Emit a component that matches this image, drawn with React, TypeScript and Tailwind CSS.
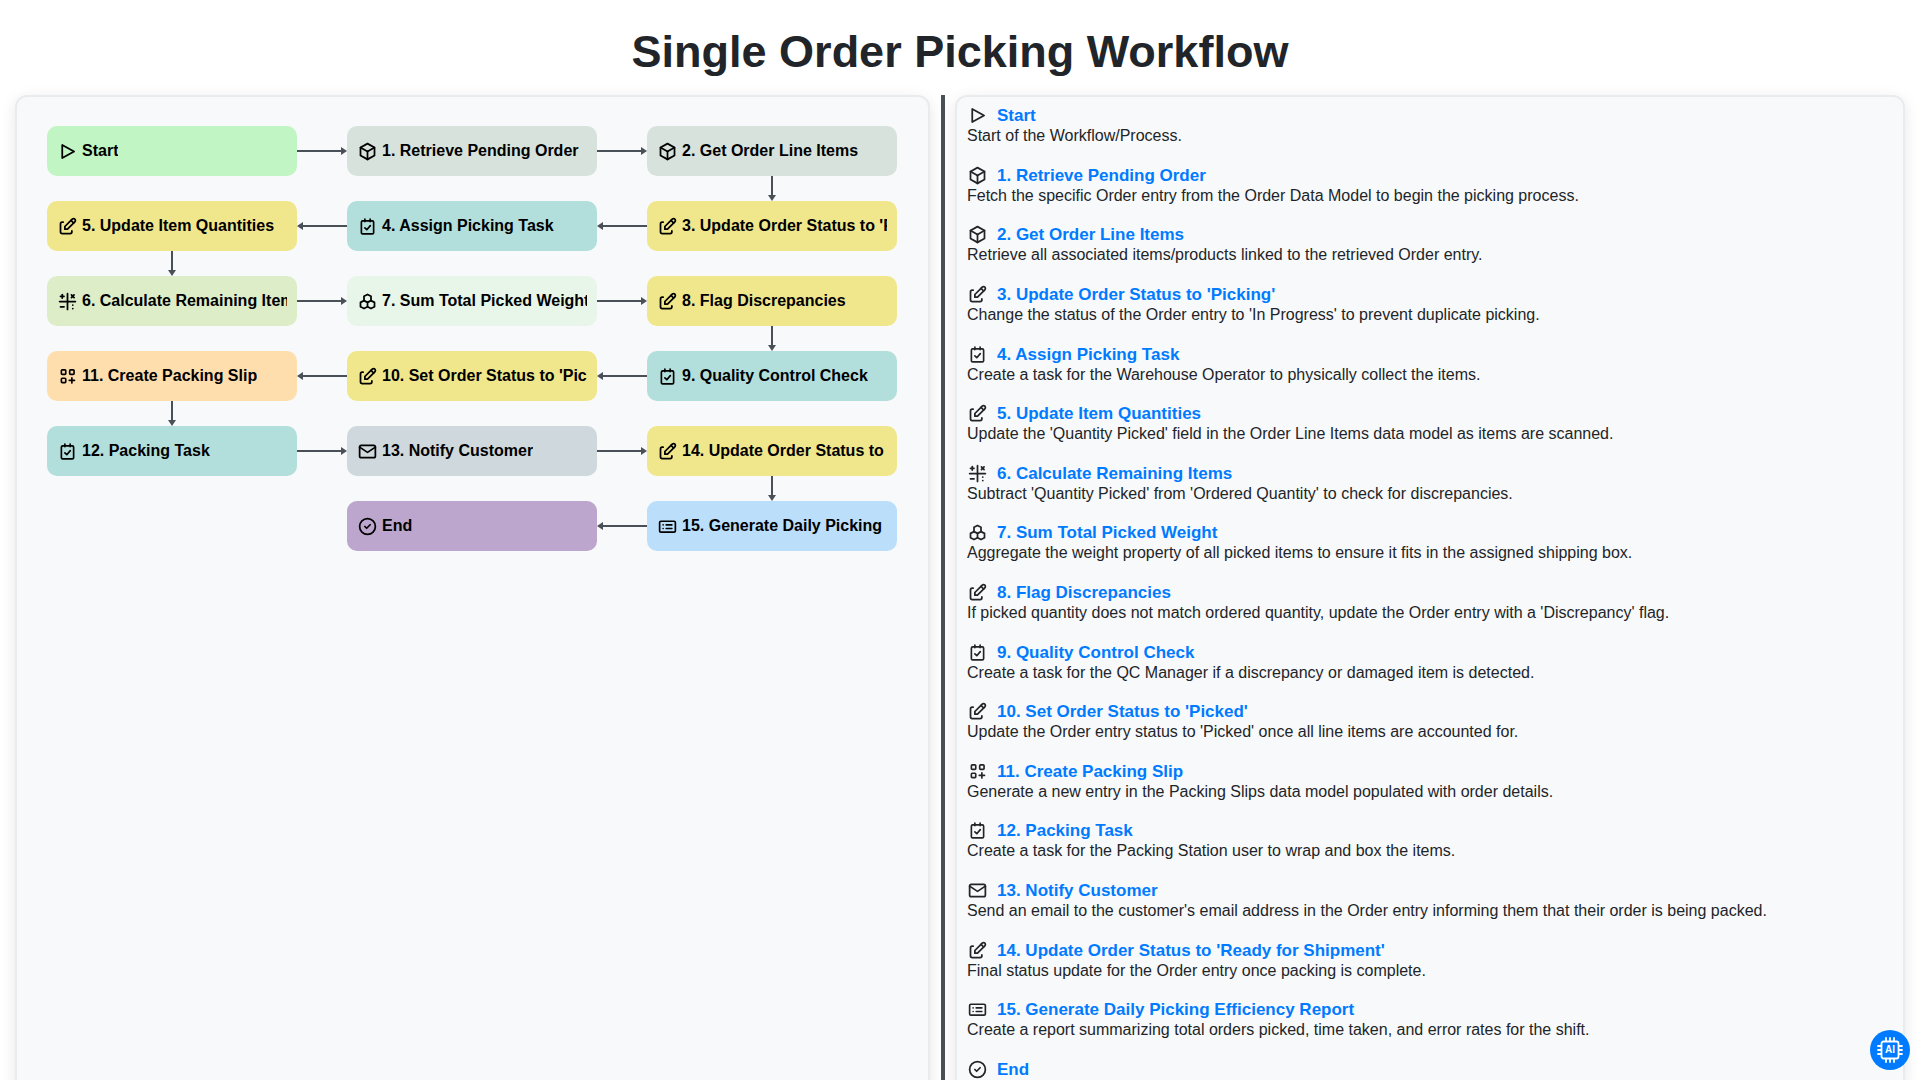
import type { ReactNode } from 'react';
import {
  TbBox,
  TbEdit,
  TbMathSymbols,
  TbHexagons,
  TbMail,
  TbCircleCheck,
} from 'react-icons/tb';

type IconProps = { size?: number; className?: string };

function PlayIcon({ size = 21, className }: IconProps) {
  return (
    <svg width={size} height={size} viewBox="0 0 24 24" fill="none" stroke="currentColor" strokeWidth="2" strokeLinecap="round" strokeLinejoin="round" className={className}>
      <path d="M6 4.5v15l13.5 -7.5z" />
    </svg>
  );
}

function TaskIcon({ size = 21, className }: IconProps) {
  return (
    <svg width={size} height={size} viewBox="0 0 24 24" fill="none" stroke="currentColor" strokeWidth="1.9" strokeLinecap="round" strokeLinejoin="round" className={className}>
      <rect x="5" y="5.5" width="14" height="15" rx="1.5" />
      <path d="M9 3.5v3M15 3.5v3M9 13.5l2.2 2.2l4 -4.7" />
    </svg>
  );
}

function SlipIcon({ size = 21, className }: IconProps) {
  return (
    <svg width={size} height={size} viewBox="0 0 24 24" fill="none" stroke="currentColor" strokeWidth="1.9" strokeLinecap="round" strokeLinejoin="round" className={className}>
      <rect x="5" y="4.5" width="5" height="5" rx="1" />
      <rect x="14.5" y="4.5" width="5" height="5" rx="1" />
      <rect x="5" y="14" width="5" height="5" rx="1" />
      <path d="M14 16.5h6M17 13.5v6" />
    </svg>
  );
}

function ReportIcon({ size = 21, className }: IconProps) {
  return (
    <svg width={size} height={size} viewBox="0 0 24 24" fill="none" stroke="currentColor" strokeWidth="1.9" strokeLinecap="round" strokeLinejoin="round" className={className}>
      <rect x="3" y="6" width="18" height="12.5" rx="1.5" />
      <path d="M7 10.2h.01M7 14.3h.01M10.5 10.2h6.5M10.5 14.3h6.5" />
    </svg>
  );
}

const icons: Record<string, (p: IconProps) => ReactNode> = {
  play: PlayIcon,
  box: TbBox,
  edit: TbEdit,
  task: TaskIcon,
  math: TbMathSymbols,
  sum: TbHexagons,
  slip: SlipIcon,
  mail: TbMail,
  report: ReportIcon,
  end: TbCircleCheck,
};

const steps = [
  { icon: 'play', title: 'Start', desc: 'Start of the Workflow/Process.' },
  { icon: 'box', title: '1. Retrieve Pending Order', desc: 'Fetch the specific Order entry from the Order Data Model to begin the picking process.' },
  { icon: 'box', title: '2. Get Order Line Items', desc: 'Retrieve all associated items/products linked to the retrieved Order entry.' },
  { icon: 'edit', title: "3. Update Order Status to 'Picking'", desc: "Change the status of the Order entry to 'In Progress' to prevent duplicate picking." },
  { icon: 'task', title: '4. Assign Picking Task', desc: 'Create a task for the Warehouse Operator to physically collect the items.' },
  { icon: 'edit', title: '5. Update Item Quantities', desc: "Update the 'Quantity Picked' field in the Order Line Items data model as items are scanned." },
  { icon: 'math', title: '6. Calculate Remaining Items', desc: "Subtract 'Quantity Picked' from 'Ordered Quantity' to check for discrepancies." },
  { icon: 'sum', title: '7. Sum Total Picked Weight', desc: 'Aggregate the weight property of all picked items to ensure it fits in the assigned shipping box.' },
  { icon: 'edit', title: '8. Flag Discrepancies', desc: "If picked quantity does not match ordered quantity, update the Order entry with a 'Discrepancy' flag." },
  { icon: 'task', title: '9. Quality Control Check', desc: 'Create a task for the QC Manager if a discrepancy or damaged item is detected.' },
  { icon: 'edit', title: "10. Set Order Status to 'Picked'", desc: "Update the Order entry status to 'Picked' once all line items are accounted for." },
  { icon: 'slip', title: '11. Create Packing Slip', desc: 'Generate a new entry in the Packing Slips data model populated with order details.' },
  { icon: 'task', title: '12. Packing Task', desc: 'Create a task for the Packing Station user to wrap and box the items.' },
  { icon: 'mail', title: '13. Notify Customer', desc: "Send an email to the customer's email address in the Order entry informing them that their order is being packed." },
  { icon: 'edit', title: "14. Update Order Status to 'Ready for Shipment'", desc: 'Final status update for the Order entry once packing is complete.' },
  { icon: 'report', title: '15. Generate Daily Picking Efficiency Report', desc: 'Create a report summarizing total orders picked, time taken, and error rates for the shift.' },
  { icon: 'end', title: 'End', desc: '' },
];

function Node({ step, color }: { step: number; color: string }) {
  const s = steps[step];
  const Icon = icons[s.icon];
  return (
    <div className={`flex h-[50px] items-center gap-[5px] overflow-hidden rounded-[10px] px-[10px] text-base font-bold whitespace-nowrap text-black ${color}`}>
      <span className="flex w-5 shrink-0 justify-center">
        <Icon size={21} className="block shrink-0" />
      </span>
      <span className="overflow-hidden">{s.title}</span>
    </div>
  );
}

function ArrowH({ left }: { left?: boolean }) {
  return (
    <div className="flex items-center">
      <svg width="50" height="10" viewBox="0 0 50 10" className={left ? 'rotate-180' : ''}>
        <path d="M0 5H45" stroke="#495057" strokeWidth="2" />
        <path d="M44 1L50 5L44 9Z" fill="#495057" />
      </svg>
    </div>
  );
}

function ArrowV() {
  return (
    <div className="flex justify-center">
      <svg width="10" height="25" viewBox="0 0 10 25">
        <path d="M5 0V20" stroke="#495057" strokeWidth="2" />
        <path d="M1 19L5 25L9 19Z" fill="#495057" />
      </svg>
    </div>
  );
}

function Blank() {
  return <div />;
}

function FlowGrid() {
  return (
    <div className="grid grid-cols-[250px_50px_250px_50px_250px] grid-rows-[50px_25px_50px_25px_50px_25px_50px_25px_50px_25px_50px]">
      <Node step={0} color="bg-[#c1f5c3]" />
      <ArrowH />
      <Node step={1} color="bg-[#d8e2dc]" />
      <ArrowH />
      <Node step={2} color="bg-[#d8e2dc]" />

      <Blank /><Blank /><Blank /><Blank /><ArrowV />

      <Node step={5} color="bg-[#f0e68c]" />
      <ArrowH left />
      <Node step={4} color="bg-[#b2dfdb]" />
      <ArrowH left />
      <Node step={3} color="bg-[#f0e68c]" />

      <ArrowV /><Blank /><Blank /><Blank /><Blank />

      <Node step={6} color="bg-[#dcedc8]" />
      <ArrowH />
      <Node step={7} color="bg-[#e8f5e9]" />
      <ArrowH />
      <Node step={8} color="bg-[#f0e68c]" />

      <Blank /><Blank /><Blank /><Blank /><ArrowV />

      <Node step={11} color="bg-[#ffdead]" />
      <ArrowH left />
      <Node step={10} color="bg-[#f0e68c]" />
      <ArrowH left />
      <Node step={9} color="bg-[#b2dfdb]" />

      <ArrowV /><Blank /><Blank /><Blank /><Blank />

      <Node step={12} color="bg-[#b2dfdb]" />
      <ArrowH />
      <Node step={13} color="bg-[#cfd8dc]" />
      <ArrowH />
      <Node step={14} color="bg-[#f0e68c]" />

      <Blank /><Blank /><Blank /><Blank /><ArrowV />

      <Blank />
      <Blank />
      <Node step={16} color="bg-[#bca6cd]" />
      <ArrowH left />
      <Node step={15} color="bg-[#bbdefb]" />
    </div>
  );
}

function AiBadge() {
  return (
    <div className="fixed right-[10px] bottom-[10px] flex h-10 w-10 items-center justify-center rounded-full bg-[#007bff] text-white">
      <svg width="30" height="30" viewBox="0 0 30 30" fill="none" stroke="currentColor" strokeWidth="1.8" strokeLinecap="round" strokeLinejoin="round">
        <rect x="6.5" y="6.5" width="17" height="17" rx="2" />
        <path d="M3 11h3M3 15h3M3 19h3M24 11h3M24 15h3M24 19h3M11 3v3M15 3v3M19 3v3M11 24v3M15 24v3M19 24v3" />
      </svg>
      <span className="absolute text-[10px] leading-none font-bold">AI</span>
    </div>
  );
}

export default function App() {
  return (
    <div className="h-[1080px] overflow-hidden bg-white font-['Liberation_Sans',Arial,sans-serif] text-[#212529]">
      <h1 className="pt-[26px] pb-[17px] text-center text-[45px] leading-[52px] font-bold">Single Order Picking Workflow</h1>
      <div className="flex items-stretch pl-[15px]">
        <div className="h-[1100px] w-[915px] shrink-0 rounded-xl border-2 border-[#e9ecef] bg-[#f8f9fa] pt-[29px] pl-[30px] shadow-[0_4px_15px_rgba(0,0,0,0.1)]">
          <FlowGrid />
        </div>
        <div className="mr-[10px] ml-[11px] h-[1100px] w-1 shrink-0 bg-[#495057]" />
        <div className="h-[1100px] w-[950px] shrink-0 rounded-xl border-2 border-[#e9ecef] bg-[#f8f9fa] px-[10px] pt-[8.2px] shadow-[0_4px_15px_rgba(0,0,0,0.1)]">
          {steps.map((s) => {
            const Icon = icons[s.icon];
            return (
              <div key={s.title} className="mb-[18.6px] h-[41px]">
                <div className="flex h-[21px] items-center gap-[10px] text-[17px] leading-[21px] font-bold text-[#007bff]">
                  <span className="flex w-5 shrink-0 justify-center">
                    <Icon size={21} className="shrink-0 text-[#212529]" />
                  </span>
                  <span>{s.title}</span>
                </div>
                <p className="text-base leading-[20px]">{s.desc}</p>
              </div>
            );
          })}
        </div>
      </div>
      <AiBadge />
    </div>
  );
}
